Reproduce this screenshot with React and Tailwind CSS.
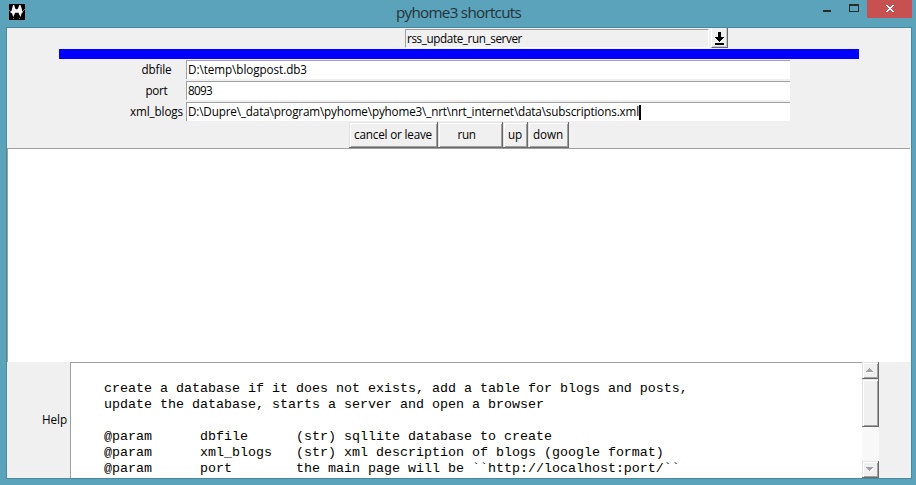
import React, { useLayoutEffect, useRef } from "react";

const ui = "font-['Open_Sans','Noto_Sans',sans-serif]";

const bevel =
  "border-b border-r border-[#696969] bg-[#f0f0f0] shadow-[inset_1px_1px_0_#e3e3e3,inset_2px_2px_0_#ffffff,inset_-1px_-1px_0_#a0a0a0]";

// Text that is condensed or widened by letter spacing to a given advance width.
function Label({ children, width }) {
  const ref = useRef(null);
  useLayoutEffect(() => {
    const el = ref.current;
    el.style.letterSpacing = "0px";
    const natural = el.getBoundingClientRect().width;
    el.style.letterSpacing = `${(width - natural) / children.length}px`;
  }, [children, width]);
  return (
    <span ref={ref} className="inline-block pb-[2px] whitespace-pre">
      {children}
    </span>
  );
}

function Field({ label, labelWidth, value, valueWidth, cursor }) {
  return (
    <div className="flex h-[21px] pt-px">
      <div className="flex h-5 w-[57px] shrink-0 items-center justify-center pr-[2px]">
        <Label width={labelWidth}>{label}</Label>
      </div>
      <div className="flex h-[19px] w-[604px] items-center border-l border-t border-[#a0a0a0] bg-white pl-px shadow-[inset_-1px_0_0_#ffffff]">
        <Label width={valueWidth}>{value}</Label>
        {cursor && <span className="h-[15px] w-[2px] bg-black" />}
      </div>
    </div>
  );
}

function PushButton({ children, width, className }) {
  return (
    <button type="button" className={`flex h-[26px] items-center justify-center ${bevel} ${className}`}>
      <Label width={width}>{children}</Label>
    </button>
  );
}

const help = `
    create a database if it does not exists, add a table for blogs and posts,
    update the database, starts a server and open a browser

    @param      dbfile      (str) sqllite database to create
    @param      xml_blogs   (str) xml description of blogs (google format)
    @param      port        the main page will be \`\`http://localhost:port/\`\``;

export default function App() {
  return (
    <div className={`flex h-[485px] w-[916px] flex-col overflow-hidden bg-[#5ba3bb] text-[11.7px] leading-[16px] text-black ${ui}`}>
      <header className="flex h-[27px] shrink-0">
        <svg className="ml-[9px] mt-1 h-4 w-4 shrink-0" viewBox="0 0 16 16">
          <rect width="16" height="16" fill="#000" />
          <path d="M4 1L5.2 1L6.2 4.5L7.5 5.5L9 4.5L10.3 1L11.5 1L12.7 4.5L13.2 7L14.2 8L12.8 9L11.5 13L10.2 10.5L9.5 8.8H6.2L5.4 10.5L4.3 13L3 9.5L1.2 8.2L2.6 6.5Z" fill="#f4f4f4" />
          <path d="M0 6h1v1H0zM1 7h1v1H1zM14 6h1v1h-1zM15 5h1v1h-1zM4 14h1v1H4zM10 14h1v1h-1z" fill="#777" />
        </svg>
        <div className="w-[371px] shrink-0" />
        <h1 className="w-[410px] pt-[2px] text-[15.2px] leading-[20px] text-[#26323a]">
          <Label width={125}>pyhome3 shortcuts</Label>
        </h1>
        <div className="flex flex-1">
          <svg className="ml-[17px] h-[18px] w-[44px] shrink-0" viewBox="823 0 44 18" shapeRendering="crispEdges">
            <path d="M823 10h8v2h-8z" fill="#2a2a2a" />
            <path d="M849 4h10v8h-10zM850 6v5h8v-5z" fill="#2a2a2a" fillRule="evenodd" />
          </svg>
          <svg className="h-[18px] w-[45px] shrink-0" viewBox="0 0 45 18" shapeRendering="crispEdges">
            <rect width="45" height="18" fill="#c75050" />
            <path d="M19 5h2v1h1v1h2V6h1V5h2v1h-1v1h-1v1h-1v1h1v1h1v1h1v1h-2v-1h-1v-1h-2v1h-1v1h-2v-1h1v-1h1V9h1V8h-1V7h-1V6h-1z" fill="#fff" />
          </svg>
        </div>
      </header>

      <main className="ml-[6px] flex h-[452px] w-[906px] shrink-0 flex-col overflow-hidden border border-[#4888a0] bg-[#f0f0f0]">
        <div className="flex h-[21px] shrink-0 pl-[398px]">
          <div className="mt-px flex h-[19px] w-[304px] items-center border-b border-l border-r border-t border-b-white border-l-[#a0a0a0] border-r-white border-t-[#a0a0a0] pl-px pt-px">
            <Label width={115}>rss_update_run_server</Label>
          </div>
          <button type="button" className="ml-[2px] flex h-5 w-[17px] items-start justify-center border-b border-l border-r border-b-[#696969] border-l-white border-r-[#696969] pt-1 shadow-[inset_-1px_-1px_0_#c8c8c8]">
            <svg className="h-[13px] w-[9px]" viewBox="0 0 9 13" shapeRendering="crispEdges">
              <path d="M3 0h3v5h3v1H8v1H7v1H6v1H5v1H4V9H3V8H2V7H1V6H0V5h3zM0 11h9v2H0z" />
            </svg>
          </button>
        </div>
        <div className="ml-[52px] h-[10px] w-[800px] shrink-0 bg-[#0000ff]" />

        <form className="ml-[122px] w-[661px] shrink-0">
          <Field label="dbfile" labelWidth={30} value="D:\temp\blogpost.db3" valueWidth={119} />
          <Field label="port" labelWidth={22} value="8093" valueWidth={24} />
          <Field label="xml_blogs" labelWidth={53} value="D:\Dupre\_data\program\pyhome\pyhome3\_nrt\nrt_internet\data\subscriptions.xml" valueWidth={451} cursor />
        </form>
        <div className="-mt-px ml-[342px] flex h-[27px] shrink-0 pt-px">
          <PushButton width={78} className="w-[89px]">cancel or leave</PushButton>
          <PushButton width={18} className="w-[65px] pr-[7px]">run</PushButton>
          <PushButton width={14} className="w-[25px]">up</PushButton>
          <PushButton width={30} className="w-[41px]">down</PushButton>
        </div>

        <div className="h-[214px] w-[903px] shrink-0 border-l border-t border-[#a0a0a0] bg-white shadow-[1px_0_0_#fff]" />

        <div className="flex h-[116px] shrink-0">
          <div className="flex w-[63px] shrink-0 items-center justify-end pr-[3px]">
            <Label width={25}>Help</Label>
          </div>
          <pre className="w-[792px] shrink-0 overflow-hidden border-l border-t border-[#a0a0a0] bg-white pl-px pt-[2px] font-['Liberation_Mono',monospace] text-[13.333px] leading-[16px]">
            {help}
          </pre>
          <div className="flex w-[17px] shrink-0 flex-col bg-[#f8f8f8]">
            <div className={`flex h-[17px] items-center justify-center ${bevel}`}>
              <svg className="h-[5px] w-[8px]" viewBox="0 0 8 5" shapeRendering="crispEdges">
                <path d="M1 4h7v1H1z" fill="#fff" />
                <path d="M3 0h1v1h1v1h1v1h1v1H0V3h1V2h1V1h1z" fill="#a0a0a0" />
              </svg>
            </div>
            <div className={`h-[48px] ${bevel}`} />
            <div className="flex-1" />
            <div className={`flex h-[17px] items-center justify-center ${bevel}`}>
              <svg className="h-[5px] w-[8px]" viewBox="0 0 8 5" shapeRendering="crispEdges">
                <path d="M7 1h1v1H7v1H6v1H5v1H4V4h1V3h1V2h1z" fill="#fff" />
                <path d="M0 0h7v1H6v1H5v1H4v1H3V3H2V2H1V1H0z" fill="#a0a0a0" />
              </svg>
            </div>
          </div>
        </div>
      </main>
    </div>
  );
}
